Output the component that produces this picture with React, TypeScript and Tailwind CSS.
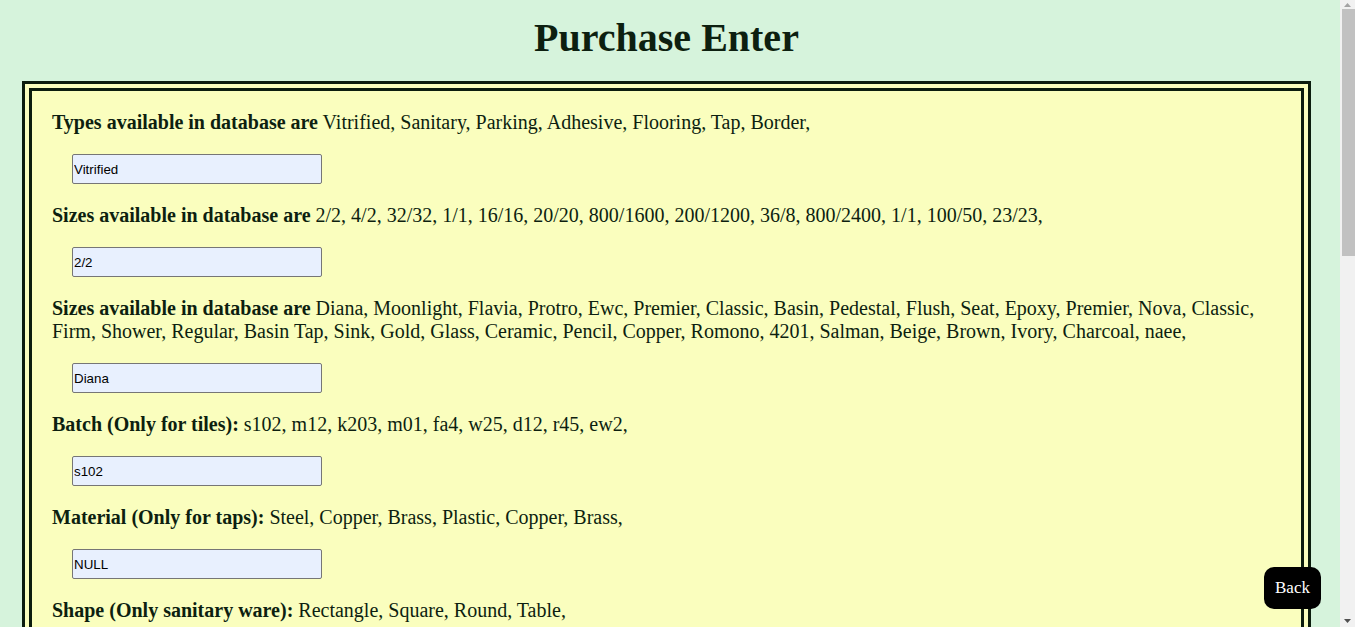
import { useState } from 'react';

interface Field {
  label: string;
  options: string[];
  value: string;
}

const fields: Field[] = [
  {
    label: 'Types available in database are',
    options: ['Vitrified', 'Sanitary', 'Parking', 'Adhesive', 'Flooring', 'Tap', 'Border'],
    value: 'Vitrified',
  },
  {
    label: 'Sizes available in database are',
    options: [
      '2/2', '4/2', '32/32', '1/1', '16/16', '20/20', '800/1600', '200/1200', '36/8',
      '800/2400', '1/1', '100/50', '23/23',
    ],
    value: '2/2',
  },
  {
    label: 'Sizes available in database are',
    options: [
      'Diana', 'Moonlight', 'Flavia', 'Protro', 'Ewc', 'Premier', 'Classic', 'Basin',
      'Pedestal', 'Flush', 'Seat', 'Epoxy', 'Premier', 'Nova', 'Classic', 'Firm', 'Shower',
      'Regular', 'Basin Tap', 'Sink', 'Gold', 'Glass', 'Ceramic', 'Pencil', 'Copper',
      'Romono', '4201', 'Salman', 'Beige', 'Brown', 'Ivory', 'Charcoal', 'naee',
    ],
    value: 'Diana',
  },
  {
    label: 'Batch (Only for tiles):',
    options: ['s102', 'm12', 'k203', 'm01', 'fa4', 'w25', 'd12', 'r45', 'ew2'],
    value: 's102',
  },
  {
    label: 'Material (Only for taps):',
    options: ['Steel', 'Copper', 'Brass', 'Plastic', 'Copper', 'Brass'],
    value: 'NULL',
  },
  {
    label: 'Shape (Only sanitary ware):',
    options: ['Rectangle', 'Square', 'Round', 'Table'],
    value: 'NULL',
  },
  { label: 'Colour:', options: ['White', 'Ivory', 'Black'], value: 'White' },
  { label: 'Supplier name:', options: [], value: '' },
  { label: 'Quantity (boxes / pieces):', options: [], value: '' },
  { label: 'Rate per unit:', options: [], value: '' },
  { label: 'Date of purchase:', options: [], value: '' },
];

const FieldRow = (props: { field: Field }) => {
  const { field } = props;
  const [value, setValue] = useState(field.value);

  return (
    <div className="pt-[20px]">
      <p className="text-[20px] leading-[23px]">
        <b>{field.label}</b>{' '}
        {field.options.map((o) => o + ', ').join('')}
      </p>
      <input
        value={value}
        onChange={(e) => setValue(e.target.value)}
        className="mt-[20px] ml-[20px] block h-[30px] w-[250px] rounded-[2px] border border-[#767676] bg-[#e8f0fe] px-[1px] font-['Liberation_Sans',Arial,sans-serif] text-[13.33px] text-black outline-none"
      />
    </div>
  );
};

// the browser's scrollbar as it shows in the reference
const ScrollBar = () => (
  <div className="fixed top-0 right-0 flex h-screen w-[15px] flex-col bg-[#f1f1f1]">
    <div className="flex h-[9px] items-center justify-center">
      <svg width="7" height="4" viewBox="0 0 7 4">
        <path d="M0 4 L3.5 0 L7 4 Z" fill="#a3a3a3" />
      </svg>
    </div>
    <div className="ml-[2px] h-[247px] bg-[#c1c1c1]" />
    <div className="flex-1" />
    <div className="flex h-[12px] items-center justify-center">
      <svg width="7" height="4" viewBox="0 0 7 4">
        <path d="M0 0 L7 0 L3.5 4 Z" fill="#505050" />
      </svg>
    </div>
  </div>
);

export default function App() {
  return (
    <div className="min-h-screen w-full bg-[#d6f3dc] font-['Liberation_Serif','Times_New_Roman',serif] text-[#0d1f10]">
      <div className="w-[1333px]">
        <h1 className="pt-[15px] pb-[20px] text-center text-[40px] font-bold leading-[46px]">
          Purchase Enter
        </h1>
        <div className="ml-[22px] w-[1289px] border-[10px] border-double border-[#0c1d0e] bg-[#fafebe] px-[20px] pb-[40px]">
          {fields.map((f, i) => (
            <FieldRow key={i} field={f} />
          ))}
          <button className="mt-[30px] ml-[20px] rounded-[10px] bg-black px-[16px] py-[8px] text-[17px] text-white">
            Submit
          </button>
        </div>
        <div className="h-[40px]" />
      </div>
      <button className="fixed right-[34px] bottom-[18px] h-[42px] w-[57px] rounded-[10px] bg-black text-[17px] text-white">
        Back
      </button>
      <ScrollBar />
    </div>
  );
}
